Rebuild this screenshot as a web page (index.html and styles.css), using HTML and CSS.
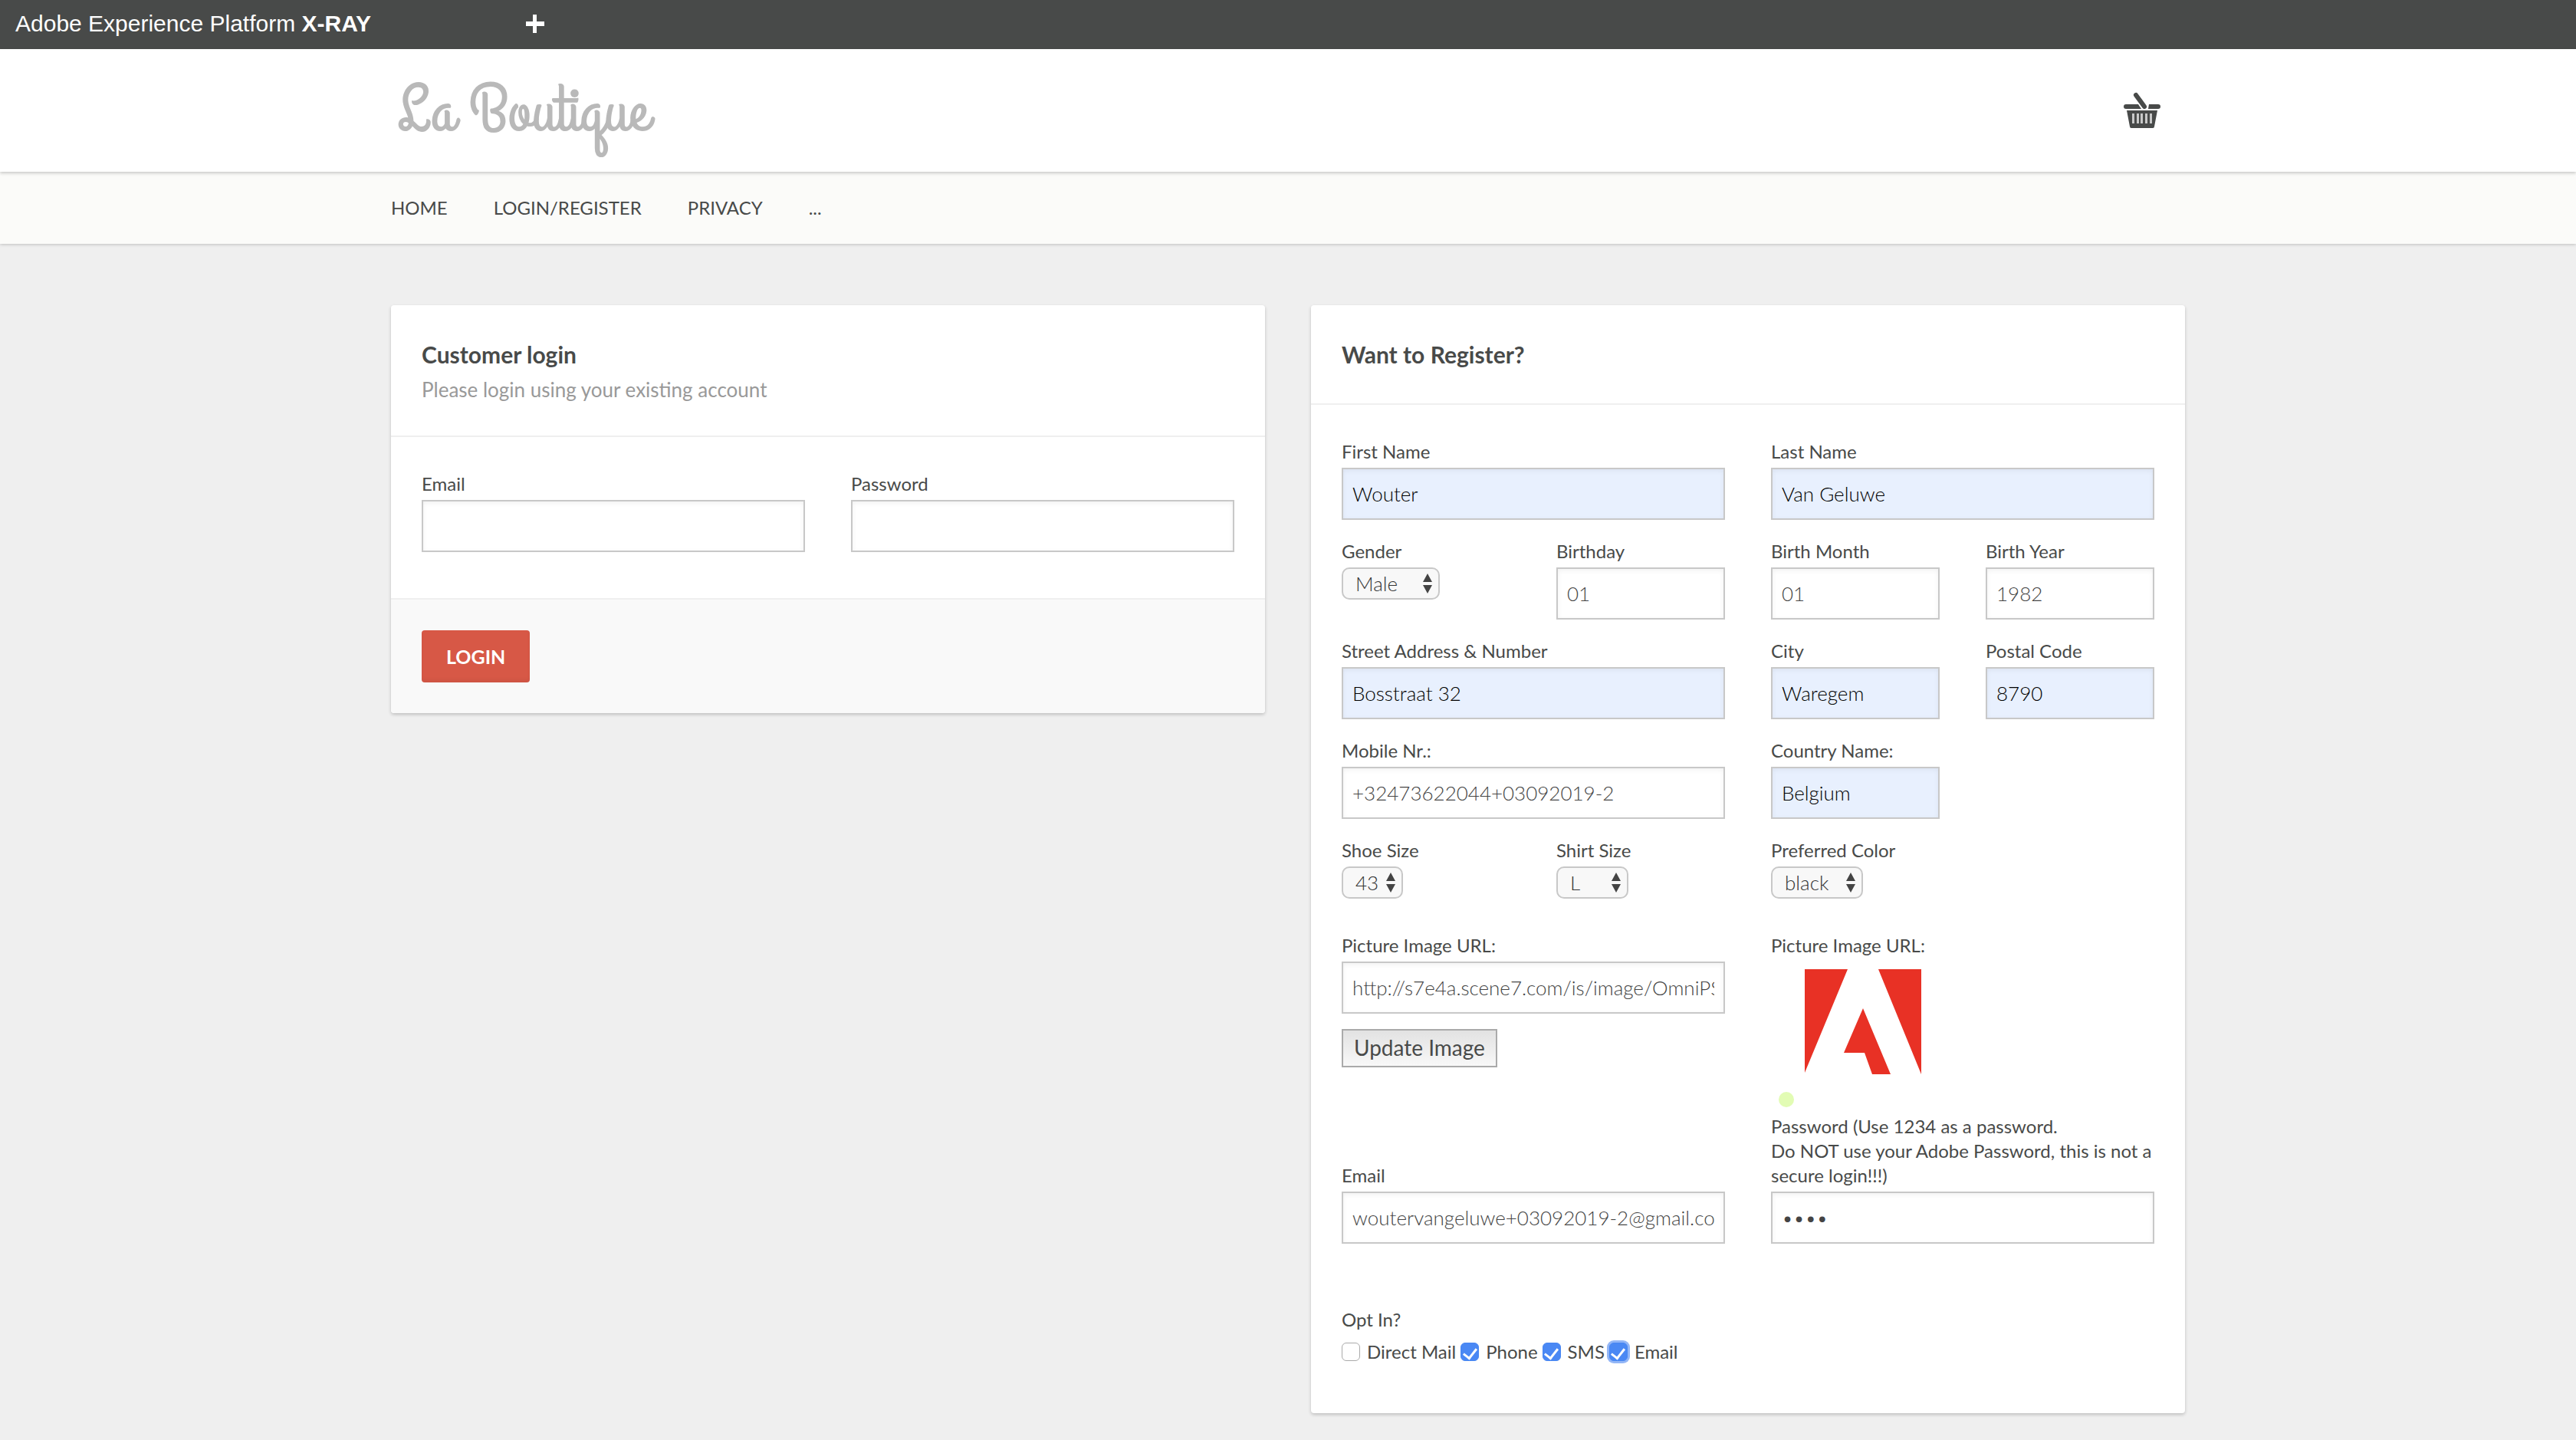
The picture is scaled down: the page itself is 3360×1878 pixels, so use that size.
FILE: index.html
```html
<!DOCTYPE html>
<html lang="en">
<head>
<meta charset="utf-8">
<title>La Boutique</title>
<meta name="viewport" content="width=device-width, initial-scale=1">
<link rel="stylesheet" href="styles.css">
</head>
<body>
<div class="xray-bar">
  <span class="xray-title">Adobe Experience Platform <strong>X-RAY</strong></span>
  <button class="xray-toggle" type="button" aria-label="Expand">
    <svg viewBox="0 0 26 26" aria-hidden="true"><path d="M1 10h24v6H1zM10 1h5v24h-5z" fill="#fff"/></svg>
  </button>
</div>
<header class="site-header">
  <div class="container header-row">
    <a class="logo" href="#">La Boutique</a>
    <a class="basket" href="#" aria-label="Basket">
      <svg viewBox="0 0 48 48" aria-hidden="true">
        <g fill="#484a49">
          <path d="M3 16h16l4 6H3a3 3 0 0 1 0-6zM33 16h12a3 3 0 0 1 0 6H32z"/>
          <path d="M16 4l11 15" fill="none" stroke="#484a49" stroke-width="6" stroke-linecap="round"/>
          <path fill-rule="evenodd" d="M4 24h40l-4 21q0 2-2 2H10q-2 0-2-2z"/>
          <path d="M11 28h3v13h-3zM17 28h3v13h-3zM22 28h3v13h-3zM28 28h3v13h-3zM34 28h3v13h-3z" fill="#c8c8c8"/>
        </g>
      </svg>
    </a>
  </div>
</header>
<nav class="main-nav">
  <ul class="container nav-list">
    <li><a href="#">HOME</a></li>
    <li><a href="#">LOGIN/REGISTER</a></li>
    <li><a href="#">PRIVACY</a></li>
    <li><a href="#">...</a></li>
  </ul>
</nav>
<main class="container columns">
  <form class="card">
    <div class="card-head">
      <h1>Customer login</h1>
      <p>Please login using your existing account</p>
    </div>
    <div class="card-body login-body">
      <div class="field wide"><label for="login-email">Email</label><input id="login-email" type="text"></div>
      <div class="field wide"><label for="login-password">Password</label><input id="login-password" type="password"></div>
    </div>
    <div class="card-foot"><button class="btn-login" type="button">LOGIN</button></div>
  </form>

  <form class="card">
    <div class="card-head"><h2>Want to Register?</h2></div>
    <div class="card-body">
      <div class="field wide"><label for="first">First Name</label><input class="filled" id="first" type="text" value="Wouter"></div>
      <div class="field wide"><label for="last">Last Name</label><input class="filled" id="last" type="text" value="Van Geluwe"></div>

      <div class="field"><label for="gender">Gender</label>
        <span class="select select-l"><select id="gender"><option>Male</option></select><svg viewBox="0 0 12 26" aria-hidden="true"><path d="M0 11L6 0l6 11zM0 15h12L6 26z" fill="#444"/></svg></span></div>
      <div class="field"><label for="day">Birthday</label><input id="day" type="text" value="01"></div>
      <div class="field"><label for="month">Birth Month</label><input id="month" type="text" value="01"></div>
      <div class="field"><label for="year">Birth Year</label><input id="year" type="text" value="1982"></div>

      <div class="field wide"><label for="street">Street Address &amp; Number</label><input class="filled" id="street" type="text" value="Bosstraat 32"></div>
      <div class="field"><label for="city">City</label><input class="filled" id="city" type="text" value="Waregem"></div>
      <div class="field"><label for="postal">Postal Code</label><input class="filled" id="postal" type="text" value="8790"></div>

      <div class="field wide"><label for="mobile">Mobile Nr.:</label><input id="mobile" type="text" value="+32473622044+03092019-2"></div>
      <div class="field"><label for="country">Country Name:</label><input class="filled" id="country" type="text" value="Belgium"></div>

      <div class="field first"><label for="shoe">Shoe Size</label>
        <span class="select select-xs"><select id="shoe"><option>43</option></select><svg viewBox="0 0 12 26" aria-hidden="true"><path d="M0 11L6 0l6 11zM0 15h12L6 26z" fill="#444"/></svg></span></div>
      <div class="field"><label for="shirt">Shirt Size</label>
        <span class="select select-s"><select id="shirt"><option>L</option></select><svg viewBox="0 0 12 26" aria-hidden="true"><path d="M0 11L6 0l6 11zM0 15h12L6 26z" fill="#444"/></svg></span></div>
      <div class="field"><label for="color">Preferred Color</label>
        <span class="select select-m"><select id="color"><option>black</option></select><svg viewBox="0 0 12 26" aria-hidden="true"><path d="M0 11L6 0l6 11zM0 15h12L6 26z" fill="#444"/></svg></span></div>

      <div class="field wide-first spaced"><label for="picture">Picture Image URL:</label><input id="picture" type="text" value="http://s7e4a.scene7.com/is/image/OmniPS">
        <button class="btn-update" type="button">Update Image</button></div>
      <div class="field wide spaced"><span>Picture Image URL:</span>
        <svg class="picture" viewBox="0 0 152 137" role="img" aria-label="Adobe"><path d="M0 0h56L0 135zM96 0h56v137zM76 51l36 86H88L78 109H51z" fill="#e83125"/></svg>
        <span class="dot"></span></div>

      <div class="field wide"><label for="email">Email</label><input id="email" type="text" value="woutervangeluwe+03092019-2@gmail.com"></div>
      <div class="field wide"><label for="password">Password (Use 1234 as a password.<br>Do NOT use your Adobe Password, this is not a secure login!!!)</label><input id="password" type="password" value="1234"></div>

      <fieldset class="optin">
        <legend>Opt In?</legend>
        <div class="checks">
          <label><input type="checkbox">Direct Mail</label>
          <label><input type="checkbox" checked>Phone</label>
          <label><input type="checkbox" checked>SMS</label>
          <label><input class="focused" type="checkbox" checked>Email</label>
        </div>
      </fieldset>
    </div>
  </form>
</main>
</body>
</html>
```
FILE: styles.css
```css
* { box-sizing: border-box; }

body {
  margin: 0;
  background: #efefef;
  color: #484a49;
  font-family: Lato, "Liberation Sans", sans-serif;
  font-size: 24px;
  line-height: 32px;
}

a { color: inherit; text-decoration: none; }
button, input, select { font: inherit; color: inherit; }

.container { width: 100%; max-width: 2340px; margin: 0 auto; }

/* Debug bar */
.xray-bar {
  display: flex;
  align-items: center;
  height: 64px;
  padding: 0 20px 2px;
  background: #484a49;
  color: #fff;
  font-family: "Helvetica Neue", "Liberation Sans", Arial, sans-serif;
  font-size: 30px;
}
.xray-title { width: 665px; }
.xray-toggle { width: 26px; height: 26px; padding: 0; border: 0; background: none; }
.xray-toggle svg { display: block; }

/* Header */
.site-header {
  position: relative;
  background: #fff;
  box-shadow: 0 2px 4px rgba(0, 0, 0, .2);
}
.header-row {
  display: flex;
  align-items: center;
  justify-content: space-between;
  height: 160px;
  padding: 0 32px 0 8px;
}
.logo {
  padding-top: 4px;
  color: #b9b9b9;
  font: 87px/100px "Grand Hotel", "Liberation Serif", cursive;
}
.basket svg { display: block; width: 48px; height: 48px; }

.main-nav { background: #fbfbf9; box-shadow: 0 1px 4px rgba(0, 0, 0, .2); }
.nav-list {
  display: flex;
  gap: 60px;
  padding: 31px 0;
  list-style: none;
}

/* Cards */
.columns {
  display: grid;
  grid-template-columns: 1fr 1fr;
  align-items: start;
  gap: 60px;
  padding: 80px 0 34px;
}
.card {
  overflow: hidden;
  background: #fff;
  border-radius: 4px;
  box-shadow: 0 2px 4px rgba(0, 0, 0, .2);
}
.card-head { min-height: 130px; padding: 40px 40px 38px; border-bottom: 2px solid #efefef; }
.card-head h1, .card-head h2 { margin: 0; font-size: 30px; line-height: 48px; }
.card-head p { margin: 0; color: #999; font-size: 26px; line-height: 44px; }
.card-body {
  display: grid;
  grid-template-columns: repeat(4, 1fr);
  align-items: start;
  gap: 25px 60px;
  padding: 45px 40px 64px;
}
.login-body { padding-bottom: 60px; }
.card-foot { padding: 40px; border-top: 2px solid #efefef; background: #f9f9f9; }

/* Fields: controls line up along the bottom of a row, labels grow upwards */
.field { display: flex; flex-direction: column; align-items: flex-start; gap: 5px; }
.wide { grid-column: span 2; align-self: end; }
.first { grid-column-start: 1; }
.wide-first { grid-column: 1 / span 2; }
.spaced { align-self: start; margin-top: 20px; }
.field input {
  width: 100%;
  height: 68px;
  padding: 0 12px;
  border: 2px solid #c8c8c8;
  border-radius: 0;
  background: #fff;
  box-shadow: inset 0 2px 6px rgba(0, 0, 0, .06);
  color: #444;
  font-size: 26px;
  font-weight: 300;
}
.field .filled { background: #e8f0fe; color: #000; }

.select { position: relative; display: block; height: 42px; }
.select select {
  appearance: none;
  display: block;
  width: 100%;
  height: 100%;
  padding: 0 16px;
  border: 2px solid #c8c8c8;
  border-radius: 10px;
  background: #f8f8f8;
  color: #333;
  font-size: 26px;
  font-weight: 300;
}
.select svg { position: absolute; top: 8px; right: 10px; width: 12px; height: 26px; }
.select-l { width: 128px; }
.select-m { width: 120px; }
.select-s { width: 94px; }
.select-xs { width: 80px; }

.picture { width: 152px; height: 137px; margin: 10px 0 18px 44px; }
.dot { width: 20px; height: 20px; margin: 0 0 -16px 10px; border-radius: 50%; background: #e2fcb4; }

/* Buttons */
.btn-login {
  height: 68px;
  padding: 0 32px;
  border: 0;
  border-radius: 4px;
  background: #d75846;
  box-shadow: inset 0 -4px 4px rgba(0, 0, 0, .04);
  color: #fff;
  font-size: 25px;
  font-weight: 700;
}
.btn-update {
  height: 50px;
  margin-top: 15px;
  padding: 0 14px 2px;
  border: 2px solid #aaa;
  background: linear-gradient(#e2e2e2, #f8f8f8);
  font-size: 28px;
}

/* Opt-in */
.optin { grid-column: 1 / -1; margin: 58px 0 0; padding: 0; border: 0; }
.optin legend { padding: 0; }
.checks { display: flex; gap: 6px; margin-top: 10px; }
.checks label { display: flex; align-items: center; gap: 9px; }
.checks input {
  appearance: none;
  display: grid;
  place-items: center;
  width: 24px;
  height: 24px;
  margin: 0;
  border: 1px solid #aaa;
  border-radius: 6px;
  background: #fff;
}
.checks input:checked { border-color: #4787f3; background: #4a88f4; }
.checks input:checked::before {
  content: "";
  width: 8px;
  height: 14px;
  border: solid #fff;
  border-width: 0 3px 3px 0;
  transform: rotate(38deg);
}
.checks .focused { box-shadow: 0 0 0 3px #93b6f6; }
```
